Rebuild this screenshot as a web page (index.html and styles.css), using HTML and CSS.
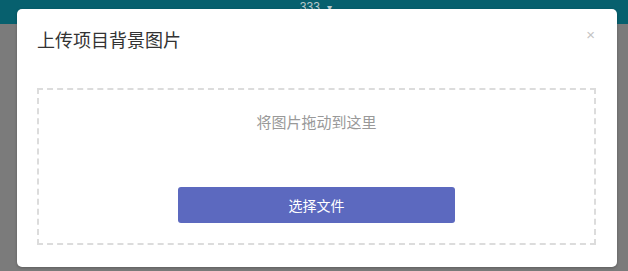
FILE: index.html
```html
<!DOCTYPE html>
<html lang="zh-CN">
<head>
    <meta charset="UTF-8">
    <meta name="viewport" content="width=device-width, initial-scale=1.0">
    <title>上传项目背景图片</title>
    <link rel="stylesheet" href="styles.css">
</head>
<body>
    <header class="topbar">
        <span class="user">333 <span class="caret">&#9662;</span></span>
    </header>
    <div class="backdrop"></div>

    <div class="modal">
        <div class="modal-header">
            <h2>上传项目背景图片</h2>
            <span class="close">&times;</span>
        </div>
        <div class="dropzone">
            <p class="hint">将图片拖动到这里</p>
            <button class="pick">选择文件</button>
        </div>
    </div>
</body>
</html>
```

FILE: styles.css
```css
html, body {
    height: 100%;
}
body {
    margin: 0;
    display: flex;
    flex-direction: column;
    font-family: "Noto Sans CJK SC", "Liberation Sans", sans-serif;
    background-color: #7b7b7b;
}
.topbar {
    height: 24px;
    background-color: #07606e;
    display: flex;
    justify-content: center;
}
.topbar .user {
    color: #b9c9cc;
    font-size: 12px;
    line-height: 14px;
    margin-left: 4px;
    font-family: "Liberation Sans", sans-serif;
}
.caret {
    margin-left: 4px;
    font-size: 10px;
}
.backdrop {
    flex: 1;
    background-color: #7b7b7b;
}
.modal {
    position: absolute;
    top: 9px;
    left: 17px;
    width: 600px;
    height: 258px;
    box-sizing: border-box;
    background-color: #ffffff;
    border-radius: 5px;
    padding: 18px 21px 22px 20px;
    display: flex;
    flex-direction: column;
    box-shadow: 0 1px 3px rgba(0, 0, 0, 0.25);
}
.modal-header {
    display: flex;
    justify-content: space-between;
    align-items: flex-start;
    height: 24px;
    margin-bottom: 37px;
}
.modal-header h2 {
    margin: 0;
    font-size: 18px;
    font-weight: normal;
    line-height: 24px;
    color: #333333;
}
.close {
    color: #c4c4c4;
    font-size: 15px;
    line-height: 15px;
    margin-right: 1px;
    font-family: "Liberation Sans", sans-serif;
}
.dropzone {
    flex: 1;
    border: 2px dashed #dcdcdc;
    display: flex;
    flex-direction: column;
    align-items: center;
    padding-top: 22px;
}
.hint {
    margin: 0;
    font-size: 15px;
    line-height: 20px;
    color: #999999;
}
.pick {
    margin-top: 55px;
    width: 277px;
    height: 36px;
    border: none;
    border-radius: 3px;
    background-color: #5c69bf;
    color: #ffffff;
    font-family: "Noto Sans CJK SC", "Liberation Sans", sans-serif;
    font-size: 14px;
    cursor: pointer;
}
```
